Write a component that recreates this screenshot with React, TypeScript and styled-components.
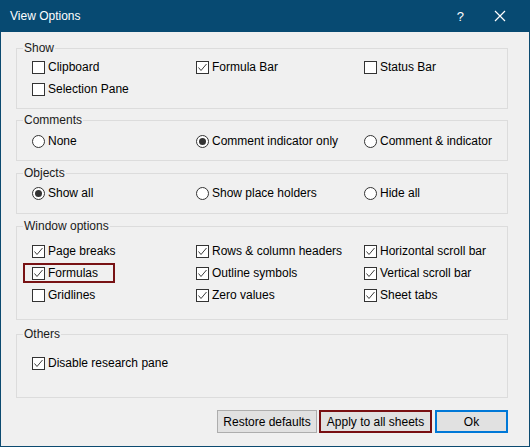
import React from 'react';
import styled, {createGlobalStyle, css} from 'styled-components';

const GlobalStyle = createGlobalStyle`
  html, body {
    margin: 0;
    padding: 0;
    background: #ffffff;
  }
  * {
    box-sizing: border-box;
  }
`

type Item = {label: string, kind: 'check' | 'radio', checked?: boolean, highlight?: boolean}
type Group = {title: string, rows: (Item | null)[][], mt: number, pt: number, pb: number}

const groups: Group[] = [
    {
        title: 'Show', mt: 0, pt: 0, pb: 8,
        rows: [
            [{label: 'Clipboard', kind: 'check'}, {label: 'Formula Bar', kind: 'check', checked: true}, {label: 'Status Bar', kind: 'check'}],
            [{label: 'Selection Pane', kind: 'check'}, null, null],
        ],
    },
    {
        title: 'Comments', mt: 3, pt: 2, pb: 8,
        rows: [
            [{label: 'None', kind: 'radio'}, {label: 'Comment indicator only', kind: 'radio', checked: true}, {label: 'Comment & indicator', kind: 'radio'}],
        ],
    },
    {
        title: 'Objects', mt: 4, pt: 1, pb: 9,
        rows: [
            [{label: 'Show all', kind: 'radio', checked: true}, {label: 'Show place holders', kind: 'radio'}, {label: 'Hide all', kind: 'radio'}],
        ],
    },
    {
        title: 'Window options', mt: 4, pt: 6, pb: 13,
        rows: [
            [{label: 'Page breaks', kind: 'check', checked: true}, {label: 'Rows & column headers', kind: 'check', checked: true}, {label: 'Horizontal scroll bar', kind: 'check', checked: true}],
            [{label: 'Formulas', kind: 'check', checked: true, highlight: true}, {label: 'Outline symbols', kind: 'check', checked: true}, {label: 'Vertical scroll bar', kind: 'check', checked: true}],
            [{label: 'Gridlines', kind: 'check'}, {label: 'Zero values', kind: 'check', checked: true}, {label: 'Sheet tabs', kind: 'check', checked: true}],
        ],
    },
    {
        title: 'Others', mt: 6, pt: 10, pb: 23,
        rows: [
            [{label: 'Disable research pane', kind: 'check', checked: true}, null, null],
        ],
    },
]

const Box = ({item}: {item: Item}) => {
    if (item.kind === 'radio') {
        return <Radio>{item.checked && <Dot/>}</Radio>
    }
    return (
        <Check>
            {item.checked && (
                <svg width="11" height="11" viewBox="0 0 11 11">
                    <path d="M1.5 5.5 L4 8.5 L9.5 2" fill="none" stroke="#3c3c3c" strokeWidth="1"/>
                </svg>
            )}
        </Check>
    )
}

export default function App() {
    return (
        <>
            <GlobalStyle/>
            <Window>
                <TitleBar>
                    <Title>View Options</Title>
                    <TitleButtons>
                        <Help>?</Help>
                        <svg width="12" height="12" viewBox="0 0 12 12">
                            <path d="M1 1 L11 11 M11 1 L1 11" stroke="#ffffff" strokeWidth="1.2"/>
                        </svg>
                    </TitleButtons>
                </TitleBar>
                <Body>
                    {groups.map(group => (
                        <GroupBox key={group.title} $mt={group.mt} $pt={group.pt} $pb={group.pb}>
                            <Legend>{group.title}</Legend>
                            {group.rows.map((row, i) => (
                                <Row key={i}>
                                    {row.map((item, j) => item ? (
                                        <Option key={j} $highlight={item.highlight}>
                                            <Box item={item}/>
                                            <Label>{item.label}</Label>
                                        </Option>
                                    ) : <span key={j}/>)}
                                </Row>
                            ))}
                        </GroupBox>
                    ))}
                    <Footer>
                        <Button $width={100}>Restore defaults</Button>
                        <Button $width={113} $variant="marked">Apply to all sheets</Button>
                        <Button $width={73} $variant="default">Ok</Button>
                    </Footer>
                </Body>
            </Window>
        </>
    )
}

const Window = styled.div`
  width: 530px;
  height: 447px;
  background: #f0f0f0;
  border: 1px solid #0c4a70;
  border-top: none;
  font-family: "Liberation Sans", Arial, sans-serif;
  font-size: 12px;
  color: #000;
  display: flex;
  flex-direction: column;
`

const TitleBar = styled.div`
  height: 32px;
  margin: 0 -1px;
  background: #074a72;
  display: flex;
  align-items: center;
  justify-content: space-between;
  padding: 0 24px 0 10px;
`

const Title = styled.span`
  color: #ffffff;
  font-size: 12px;
`

const TitleButtons = styled.div`
  display: flex;
  align-items: center;
  gap: 30px;
`

const Help = styled.span`
  color: #ffffff;
  font-size: 13px;
`

const Body = styled.div`
  padding: 8px 21px 0 15px;
  display: flex;
  flex-direction: column;
`

const GroupBox = styled.fieldset<{ $mt: number, $pt: number, $pb: number }>`
  margin: ${p => p.$mt}px 0 0;
  border: 1px solid #dcdcdc;
  padding: ${p => p.$pt}px 0 ${p => p.$pb}px 15px;
  min-width: 0;
`

const Legend = styled.legend`
  padding: 0 1px;
  margin-left: -9px;
  line-height: 16px;
  color: #1a1a1a;
`

const Row = styled.div`
  display: grid;
  grid-template-columns: 164px 168px 1fr;
  height: 22px;
  align-items: center;
`

const Option = styled.label<{ $highlight?: boolean }>`
  display: flex;
  align-items: center;
  gap: 3px;
  position: relative;
  justify-self: start;

  ${p => p.$highlight && css`
    &::before {
      content: '';
      position: absolute;
      left: -9px;
      right: -17px;
      top: -3px;
      bottom: -3px;
      border: 2px solid #781214;
    }
  `}
`

const Check = styled.span`
  width: 13px;
  height: 13px;
  border: 1px solid #333333;
  background: #ffffff;
  display: flex;
  align-items: center;
  justify-content: center;
  flex: none;
`

const Radio = styled.span`
  width: 13px;
  height: 13px;
  border: 1px solid #333333;
  border-radius: 50%;
  background: #ffffff;
  display: flex;
  align-items: center;
  justify-content: center;
  flex: none;
`

const Dot = styled.span`
  width: 7px;
  height: 7px;
  border-radius: 50%;
  background: #333333;
`

const Label = styled.span`
  white-space: nowrap;
`

const Footer = styled.div`
  display: flex;
  justify-content: flex-end;
  gap: 2px;
  margin-top: 12px;
`

const Button = styled.button<{ $width: number, $variant?: 'marked' | 'default' }>`
  width: ${p => p.$width}px;
  height: 23px;
  background: #e1e1e1;
  border: 1px solid #adadad;
  font-family: inherit;
  font-size: 12px;
  color: #000;
  padding: 0;
  ${p => p.$variant === 'marked' && css`
    border: 2px solid #790f12;
  `}
  ${p => p.$variant === 'default' && css`
    border: 2px solid #0078d7;
    margin-left: 1px;
  `}
`
